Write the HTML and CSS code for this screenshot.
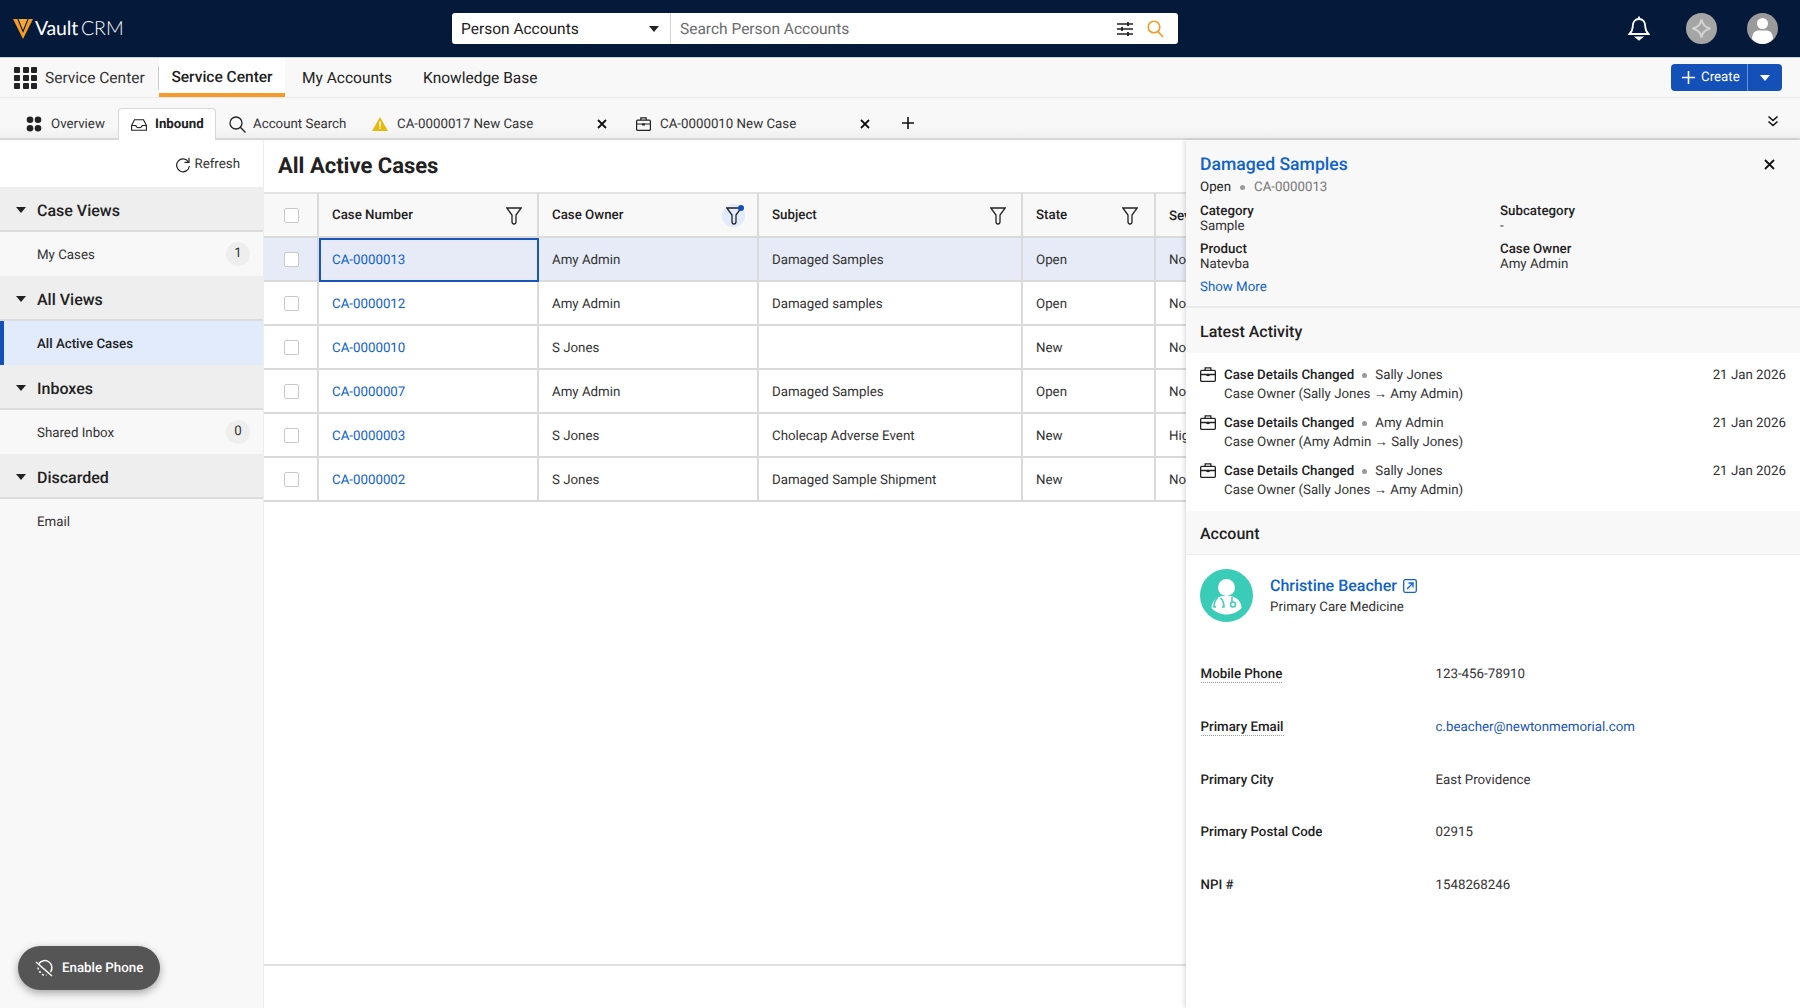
FILE: index.html
```html
<!DOCTYPE html>
<html lang="en">
<head>
<meta charset="utf-8">
<title>Vault CRM</title>
<link rel="stylesheet" href="styles.css">
</head>
<body>
<div class="app">
  <header class="topbar">
    <div class="logo">
      <svg class="logo-v" viewBox="0 0 20 20" width="20" height="20"><path d="M0 0h20L10 20z" fill="#f59a23"/><path d="M5 0l5 12.500L15 0" fill="#f7a93c" stroke="#05193a" stroke-width="1.100"/></svg>
      <span class="logo-a">Vault</span><span class="logo-b">CRM</span>
    </div>
    <div class="search">
      <div class="search-type"><span>Person Accounts</span><i class="caret caret-dark"></i></div>
      <div class="search-input">
        <span class="placeholder">Search Person Accounts</span>
        <svg class="sliders" width="16" height="14" viewBox="0 0 16 14" fill="none" stroke="#222" stroke-width="1.400"><path d="M0 2h16M0 7h16M0 12h16"/><path d="M11 0v4M5 5v4M11 10v4" stroke-width="1.800"/></svg>
        <svg class="magnify" width="17" height="18" viewBox="0 0 17 18" fill="none" stroke="#f59a23" stroke-width="1.600"><circle cx="7" cy="7" r="5.800"/><path d="M11 11.500l5 5.500"/></svg>
      </div>
    </div>
    <div class="top-icons">
      <svg width="22" height="25" viewBox="0 0 22 25" fill="none" stroke="#fff" stroke-width="1.800"><path d="M11 3c-4 0-6.200 3-6.200 7 0 4-1.300 6-3.300 8h19c-2-2-3.300-4-3.300-8 0-4-2.200-7-6.200-7z"/><path d="M11 0.500v2.500"/><path d="M8.500 21.500h5l-2.500 2z" fill="#fff"/></svg>
      <span class="avatar-round">
        <svg width="31" height="31" viewBox="0 0 31 31"><circle cx="15.500" cy="15.500" r="15.500" fill="#a5a5a5"/><path d="M15.500 6.500c1 5.500 3.500 8 9 9-5.500 1-8 3.500-9 9-1-5.500-3.500-8-9-9 5.500-1 8-3.500 9-9z" fill="none" stroke="#d3d3d3" stroke-width="2"/></svg>
      </span>
      <span class="avatar-round">
        <svg width="31" height="31" viewBox="0 0 31 31"><circle cx="15.500" cy="15.500" r="15.500" fill="#9a9a9a"/><circle cx="15.500" cy="10.500" r="5.500" fill="#fff"/><path d="M5 26c0-6 3-8.500 7-8.500h7c4 0 7 2.500 7 8.500-3 3.300-7 5-10.500 5S8 29.300 5 26z" fill="#fff"/></svg>
      </span>
    </div>
  </header>

  <nav class="navbar">
    <div class="grid-icon"><i></i><i></i><i></i><i></i><i></i><i></i><i></i><i></i><i></i></div>
    <span class="app-name">Service Center</span>
    <a class="nav-link nav-active">Service Center</a>
    <a class="nav-link nav-mid">My Accounts</a>
    <a class="nav-link">Knowledge Base</a>
    <div class="create">
      <span class="create-main">
        <svg width="13" height="13" viewBox="0 0 13 13" stroke="#fff" stroke-width="1.600"><path d="M6.500 0v13M0 6.500h13"/></svg>
        Create
      </span>
      <span class="create-drop"><i class="caret caret-light"></i></span>
    </div>
  </nav>

  <div class="tabs">
    <div class="tab tab-overview">
      <svg width="16" height="16" viewBox="0 0 16 16" fill="#222"><circle cx="4" cy="3.800" r="3.300"/><circle cx="12" cy="3.800" r="3.300"/><circle cx="4" cy="12.200" r="3.300"/><circle cx="12" cy="12.200" r="3.300"/></svg>
      <span>Overview</span>
    </div>
    <div class="tab tab-active">
      <svg width="16" height="12" viewBox="0 0 16 12" fill="none" stroke="#222" stroke-width="1.100"><path d="M.6 6.500 3.500.8h9l2.900 5.700v4.700H.6z"/><path d="M.6 6.500h4.200c.3 1.500 1.500 2.200 3.200 2.200s2.900-.7 3.200-2.200h4.200"/></svg>
      <span>Inbound</span>
    </div>
    <div class="tab tab-search">
      <svg width="17" height="17" viewBox="0 0 17 17" fill="none" stroke="#222" stroke-width="1.300"><circle cx="7" cy="7" r="6"/><path d="M11.300 11.300 16.500 16.500"/></svg>
      <span>Account Search</span>
    </div>
    <div class="tab tab-warn">
      <svg width="16" height="14" viewBox="0 0 16 14"><path d="M8 0l8 14H0z" fill="#e8b80d"/><path d="M7.200 4.500h1.600v5H7.200zM7.200 10.500h1.600v1.600H7.200z" fill="#fff"/></svg>
      <span class="tab-text">CA-0000017 New Case</span>
      <svg class="tab-x" width="10" height="10" viewBox="0 0 10 10" stroke="#111" stroke-width="1.800"><path d="M1 1l8 8M9 1l-8 8"/></svg>
    </div>
    <div class="tab tab-case">
      <svg width="15" height="14" viewBox="0 0 15 14" fill="none" stroke="#222" stroke-width="1.200"><rect x=".6" y="3.200" width="13.800" height="10.200" rx="1"/><path d="M4.800 3V.8h5.400V3M.6 7h13.800"/><path d="M6 6.500h3v2H6z" fill="#222" stroke="none"/></svg>
      <span class="tab-text">CA-0000010 New Case</span>
      <svg class="tab-x" width="10" height="10" viewBox="0 0 10 10" stroke="#111" stroke-width="1.800"><path d="M1 1l8 8M9 1l-8 8"/></svg>
    </div>
    <svg class="tab-plus" width="12" height="12" viewBox="0 0 12 12" stroke="#111" stroke-width="1.600"><path d="M6 0v12M0 6h12"/></svg>
    <svg class="tab-more" width="12" height="12" viewBox="0 0 12 12" fill="none" stroke="#111" stroke-width="1.600"><path d="M1.500 1.500 6 5.500l4.500-4M1.500 6.500 6 10.500l4.500-4"/></svg>
  </div>

  <div class="workspace">
    <aside class="sidebar">
      <div class="refresh">
        <svg width="16" height="16" viewBox="0 0 16 16" fill="none" stroke="#222" stroke-width="1.200"><path d="M13.500 5A6.400 6.400 0 1 0 14.400 9"/><path d="M14 .8v4.600H9.500"/></svg>
        <span>Refresh</span>
      </div>
      <div class="sec"><i class="caret caret-dark"></i>Case Views</div>
      <div class="item">My Cases<b class="badge">1</b></div>
      <div class="sec"><i class="caret caret-dark"></i>All Views</div>
      <div class="item item-active">All Active Cases</div>
      <div class="sec"><i class="caret caret-dark"></i>Inboxes</div>
      <div class="item">Shared Inbox<b class="badge">0</b></div>
      <div class="sec"><i class="caret caret-dark"></i>Discarded</div>
      <div class="item">Email</div>
    </aside>

    <main class="main">
      <h1 class="title">All Active Cases</h1>
      <div class="table-wrap">
        <table class="cases">
          <colgroup><col class="c0"><col class="c1"><col class="c2"><col class="c3"><col class="c4"><col class="c5"></colgroup>
          <thead>
            <tr>
              <th class="chk"><span class="box"></span></th>
              <th><div class="th"><span>Case Number</span><svg class="funnel" width="16" height="18" viewBox="0 0 16 18" fill="none" stroke="#222" stroke-width="1.300"><path d="M.8 1h14.400L10 8v6.500c0 1.500-1 2.500-2 2.500s-2-1-2-2.500V8z"/></svg></div></th>
              <th><div class="th"><span>Case Owner</span><span class="funnel-on"><svg width="16" height="18" viewBox="0 0 16 18" fill="none" stroke="#222" stroke-width="1.300"><path d="M.8 1h14.400L10 8v6.500c0 1.500-1 2.500-2 2.500s-2-1-2-2.500V8z"/></svg><i class="dot"></i></span></div></th>
              <th><div class="th"><span>Subject</span><svg class="funnel" width="16" height="18" viewBox="0 0 16 18" fill="none" stroke="#222" stroke-width="1.300"><path d="M.8 1h14.400L10 8v6.500c0 1.500-1 2.500-2 2.500s-2-1-2-2.500V8z"/></svg></div></th>
              <th><div class="th th-state"><span>State</span><svg class="funnel" width="16" height="18" viewBox="0 0 16 18" fill="none" stroke="#222" stroke-width="1.300"><path d="M.8 1h14.400L10 8v6.500c0 1.500-1 2.500-2 2.500s-2-1-2-2.500V8z"/></svg></div></th>
              <th class="last">Sev</th>
            </tr>
          </thead>
          <tbody>
            <tr class="sel"><td class="chk"><span class="box"></span></td><td class="focus"><a>CA-0000013</a></td><td>Amy Admin</td><td>Damaged Samples</td><td>Open</td><td class="last">No</td></tr>
            <tr><td class="chk"><span class="box"></span></td><td><a>CA-0000012</a></td><td>Amy Admin</td><td>Damaged samples</td><td>Open</td><td class="last">No</td></tr>
            <tr><td class="chk"><span class="box"></span></td><td><a>CA-0000010</a></td><td>S Jones</td><td></td><td>New</td><td class="last">No</td></tr>
            <tr><td class="chk"><span class="box"></span></td><td><a>CA-0000007</a></td><td>Amy Admin</td><td>Damaged Samples</td><td>Open</td><td class="last">No</td></tr>
            <tr><td class="chk"><span class="box"></span></td><td><a>CA-0000003</a></td><td>S Jones</td><td>Cholecap Adverse Event</td><td>New</td><td class="last">Hig</td></tr>
            <tr><td class="chk"><span class="box"></span></td><td><a>CA-0000002</a></td><td>S Jones</td><td>Damaged Sample Shipment</td><td>New</td><td class="last">No</td></tr>
          </tbody>
        </table>
      </div>
      <div class="table-foot"></div>
    </main>

    <section class="panel">
      <div class="summary">
        <div class="sum-head">
          <h2 class="sum-title">Damaged Samples</h2>
          <svg class="sum-x" width="11" height="11" viewBox="0 0 11 11" stroke="#111" stroke-width="1.800"><path d="M1 1l9 9M10 1l-9 9"/></svg>
        </div>
        <div class="sum-sub"><span>Open</span><i class="bullet"></i><span class="muted">CA-0000013</span></div>
        <div class="facts">
          <div><b>Category</b><span>Sample</span></div>
          <div><b>Subcategory</b><span>-</span></div>
          <div><b>Product</b><span>Natevba</span></div>
          <div><b>Case Owner</b><span>Amy Admin</span></div>
        </div>
        <a class="show-more">Show More</a>
      </div>
      <h3 class="band band-activity">Latest Activity</h3>
      <div class="activity">
        <div class="act">
          <svg class="brief" width="16" height="15" viewBox="0 0 15 14" fill="none" stroke="#222" stroke-width="1.200"><rect x=".6" y="3.200" width="13.800" height="10.200" rx="1"/><path d="M4.800 3V.8h5.400V3M.6 7h13.800"/><path d="M6 6.500h3v2H6z" fill="#222" stroke="none"/></svg>
          <div class="act-body">
            <div class="act-top"><b>Case Details Changed</b><i class="bullet"></i><span>Sally Jones</span><span class="date">21 Jan 2026</span></div>
            <div class="act-sub">Case Owner (Sally Jones → Amy Admin)</div>
          </div>
        </div>
        <div class="act">
          <svg class="brief" width="16" height="15" viewBox="0 0 15 14" fill="none" stroke="#222" stroke-width="1.200"><rect x=".6" y="3.200" width="13.800" height="10.200" rx="1"/><path d="M4.800 3V.8h5.400V3M.6 7h13.800"/><path d="M6 6.500h3v2H6z" fill="#222" stroke="none"/></svg>
          <div class="act-body">
            <div class="act-top"><b>Case Details Changed</b><i class="bullet"></i><span>Amy Admin</span><span class="date">21 Jan 2026</span></div>
            <div class="act-sub">Case Owner (Amy Admin → Sally Jones)</div>
          </div>
        </div>
        <div class="act">
          <svg class="brief" width="16" height="15" viewBox="0 0 15 14" fill="none" stroke="#222" stroke-width="1.200"><rect x=".6" y="3.200" width="13.800" height="10.200" rx="1"/><path d="M4.800 3V.8h5.400V3M.6 7h13.800"/><path d="M6 6.500h3v2H6z" fill="#222" stroke="none"/></svg>
          <div class="act-body">
            <div class="act-top"><b>Case Details Changed</b><i class="bullet"></i><span>Sally Jones</span><span class="date">21 Jan 2026</span></div>
            <div class="act-sub">Case Owner (Sally Jones → Amy Admin)</div>
          </div>
        </div>
      </div>
      <h3 class="band band-account">Account</h3>
      <div class="account">
        <div class="person">
          <svg width="53" height="53" viewBox="0 0 53 53"><circle cx="26.500" cy="26.500" r="26.500" fill="#3accb6"/><circle cx="26.500" cy="18.500" r="8.500" fill="#fff"/><path d="M22 27h9c6 1.500 10.500 6 10.500 12-3.500 4-9 6.500-15 6.500s-11.500-2.500-15-6.500c0-6 4.500-10.500 10.500-12z" fill="#fff"/><path d="M17.500 29c-2.500 2-3.500 5-3.500 9h2M22 38h2c0-4-1-7-3.500-9" fill="none" stroke="#3accb6" stroke-width="1.500"/><path d="M32 28v5" stroke="#3accb6" stroke-width="1.500"/><circle cx="33" cy="35.500" r="2.500" fill="none" stroke="#3accb6" stroke-width="1.500"/></svg>
          <div class="person-text">
            <div class="person-name"><a>Christine Beacher</a><svg width="14" height="14" viewBox="0 0 14 14" fill="none" stroke="#0f62c9" stroke-width="1.300"><rect x=".7" y=".7" width="12.600" height="12.600" rx="1.500"/><path d="M4 10l6-6M5.500 4H10v4.500"/></svg></div>
            <div class="person-spec">Primary Care Medicine</div>
          </div>
        </div>
        <dl class="fields">
          <dt><span class="dotted">Mobile Phone</span></dt><dd>123-456-78910</dd>
          <dt><span class="dotted">Primary Email</span></dt><dd><a>c.beacher@newtonmemorial.com</a></dd>
          <dt>Primary City</dt><dd>East Providence</dd>
          <dt>Primary Postal Code</dt><dd>02915</dd>
          <dt>NPI #</dt><dd>1548268246</dd>
        </dl>
      </div>
    </section>

    <button class="phone">
      <svg width="19" height="19" viewBox="0 0 19 19" fill="none" stroke="#fff" stroke-width="1.500"><path d="M4 4.500A7 7 0 0 1 15.500 13M1 3l16 14"/><path d="M3 8.500c.5 3 2.500 6 5.500 7.500h3" stroke-dasharray="2 2"/></svg>
      Enable Phone
    </button>
  </div>
</div>
</body>
</html>
```
FILE: styles.css
```css
* { box-sizing: border-box; }
html, body { margin: 0; height: 100%; }
body { font-family: Roboto, "Noto Sans", sans-serif; font-size: 13.300px; color: #222; background: #fff; overflow: hidden; text-rendering: geometricPrecision; }
.app { width: 1800px; height: 1008px; display: flex; flex-direction: column; }
a { color: #0f62c9; text-decoration: none; }
h1, h2, h3, dl, dd { margin: 0; }

.caret { display: block; width: 0; height: 0; border-left: 5px solid transparent; border-right: 5px solid transparent; }
.caret-dark { border-top: 6px solid #222; }
.caret-light { border-top: 6px solid #fff; }

.topbar { height: 58px; flex: none; background: #05193a; border-bottom: 1px solid #c9cfdc; display: flex; align-items: center; padding-left: 13px; }
.logo { width: 439px; display: flex; align-items: center; color: #fff; font-family: Lato, sans-serif; font-size: 19.500px; }
.logo-v { margin-right: 2px; }
.logo-a { font-weight: 400; letter-spacing: -0.2px; }
.logo-b { font-weight: 300; margin-left: 3px; }
.search { width: 726px; height: 31px; background: #fff; border-radius: 3px; display: flex; }
.search-type { width: 219px; display: flex; align-items: center; justify-content: space-between; padding: 0 11px 0 9px; border-right: 1px solid #d0d5e4; font-size: 15.500px; color: #222; }
.search-input { flex: 1; display: flex; align-items: center; padding: 0 14px 0 9px; }
.placeholder { flex: 1; font-size: 15.500px; color: #6b6b6b; }
.sliders { margin-right: 14px; }
.top-icons { margin-left: auto; display: flex; align-items: center; padding-right: 22px; }
.top-icons > svg { margin-right: 36px; }
.avatar-round { display: block; height: 31px; }
.avatar-round + .avatar-round { margin-left: 30px; }

.navbar { height: 40px; flex: none; background: #f8f8f8; border-bottom: 1px solid #ebebeb; display: flex; align-items: center; padding-left: 14px; font-size: 15.500px; }
.grid-icon { width: 23px; height: 22px; display: grid; grid-template-columns: repeat(3, 6px); grid-auto-rows: 6px; gap: 2px 2.500px; }
.grid-icon i { background: #222; border-radius: 1px; }
.app-name { margin-left: 8px; width: 114px; height: 24px; line-height: 24px; border-right: 1px solid #ccc; color: #333; }
.nav-link { color: #222; }
.nav-active { width: 126px; height: 39px; line-height: 38px; text-align: center; background: #fff; border-bottom: 4px solid #f59a2b; font-weight: 500; font-size: 15.500px; }
.nav-mid { margin: 0 31px 0 17px; }
.create { margin-left: auto; margin-right: 18px; height: 27px; display: flex; background: #1350b8; border-radius: 4px; color: #fff; font-size: 13.300px; }
.create-main { width: 77px; display: flex; align-items: center; gap: 6px; padding-left: 11px; border-right: 1px solid #6c93d6; }
.create-drop { width: 34px; display: flex; align-items: center; justify-content: center; }

.tabs { height: 42px; flex: none; background: linear-gradient(#f8f8f8 70%, #efefef); border-bottom: 2px solid #d8d8d8; display: flex; align-items: flex-end; position: relative; font-size: 13.300px; color: #333; }
.tab { height: 32px; display: flex; align-items: center; margin-bottom: -2px; }
.tab-overview { width: 118px; padding-left: 26px; gap: 9px; }
.tab-active { width: 98px; padding-left: 12px; gap: 8px; background: #fff; border: 1px solid #d8d8d8; border-bottom: 0; border-radius: 4px 4px 0 0; font-weight: 700; color: #222; }
.tab-search { width: 143px; padding-left: 13px; gap: 7px; }
.tab-warn { width: 264px; padding-left: 13px; gap: 9px; }
.tab-case { width: 264px; padding-left: 13px; gap: 9px; }
.tab-text { width: 195px; }
.tab-x { margin-left: -4px; }
.tab-plus { margin: 0 0 9px 15px; }
.tab-more { margin: 0 21px 11px auto; }

.workspace { flex: 1; min-height: 0; display: flex; position: relative; }
.sidebar { width: 264px; flex: none; background: #f8f8f8; border-right: 1px solid #ededed; }
.refresh { height: 47px; padding-top: 2px; background: #fff; display: flex; align-items: center; justify-content: flex-end; gap: 4px; padding-right: 23px; color: #333; }
.sec { height: 45px; padding-top: 3px; background: #eeeeee; border-bottom: 2px solid #dcdcdc; display: flex; align-items: center; font-size: 16px; font-weight: 500; color: #222; }
.sec .caret { margin: 0 11px 0 16px; }
.item { height: 44px; display: flex; align-items: center; justify-content: space-between; padding: 2px 13px 0 37px; color: #333; }
.item-active { background: #e1ebfb; border-left: 4px solid #1350b8; padding-left: 33px; font-weight: 500; color: #222; }
.badge { width: 24px; height: 24px; margin-top: -2px; border-radius: 50%; background: #eeeeee; font-weight: 400; text-align: center; line-height: 24px; }

.main { flex: 1; min-width: 0; display: flex; flex-direction: column; background: #fff; }
.title { height: 52px; flex: none; padding-left: 14px; font-size: 22px; line-height: 53px; font-weight: 700; color: #222; }
.table-wrap { flex: 1; min-height: 0; overflow: hidden; }
.cases { border-collapse: separate; border-spacing: 0; table-layout: fixed; width: 922px; }
.c0 { width: 55px; } .c1 { width: 220px; } .c2 { width: 220px; } .c3 { width: 264px; } .c4 { width: 133px; } .c5 { width: 30px; }
.cases th, .cases td { height: 44px; padding: 2px 13px 0; text-align: left; border-right: 2px solid #dadada; border-bottom: 2px solid #dadada; font-size: 13.300px; font-weight: 400; color: #333; white-space: nowrap; overflow: hidden; }
.cases th { height: 46px; background: #f8f8f8; border-top: 2px solid #e2e2e2; font-weight: 500; color: #222; }
.cases .chk { padding: 0 0 0 20px; }
.cases .last { border-right: 0; padding-right: 0; }
.th { display: flex; align-items: center; justify-content: space-between; padding-right: 2px; margin-top: -1px; }
.th-state { padding-right: 3px; }
.box { display: block; width: 15px; height: 15px; border: 1px solid #c9c9c9; border-radius: 2px; background: #fff; }
.sel td { background: #e7ebf7; }
.cases td.focus { box-shadow: inset 2px 2px 0 0 #1a56b8; border-right-color: #1a56b8; border-bottom-color: #1a56b8; }
.funnel-on { position: relative; width: 23px; height: 23px; margin: 0 -3px 0 0; border-radius: 50%; background: #e1ebfb; display: flex; align-items: center; justify-content: center; }
.dot { position: absolute; top: 1px; right: 1px; width: 6px; height: 6px; border-radius: 50%; background: #1350b8; }
.table-foot { height: 44px; flex: none; border-top: 2px solid #e0e0e0; }

.panel { position: absolute; top: 0; right: 0; bottom: 0; width: 614px; background: #fff; box-shadow: -2px 0 4px rgba(0,0,0,.12); display: flex; flex-direction: column; }
.summary { height: 168px; flex: none; background: #f8f8f8; border-bottom: 2px solid #ebebeb; padding: 13px 14px 0; }
.sum-head { display: flex; justify-content: space-between; align-items: flex-start; height: 24px; }
.sum-title { font-size: 17.600px; line-height: 24px; font-weight: 500; color: #0f62c9; }
.sum-x { margin: 6px 11px 0 0; }
.sum-sub { display: flex; align-items: center; height: 20px; color: #222; }
.muted { color: #777; }
.bullet { display: block; width: 5px; height: 5px; border-radius: 50%; background: #999; margin: 0 9px; }
.facts { display: grid; grid-template-columns: 300px 1fr; row-gap: 8px; margin-top: 7px; line-height: 15px; }
.facts b { display: block; font-weight: 500; color: #222; }
.facts span { display: block; color: #333; }
.show-more { display: block; margin-top: 7px; line-height: 18px; }
.band { flex: none; height: 45px; background: #f8f8f8; padding-left: 14px; font-size: 16px; font-weight: 500; color: #222; display: flex; align-items: center; }
.band-activity { padding-top: 1px; }
.band-account { height: 44px; padding-top: 2px; border-bottom: 1px solid #ebebeb; }
.activity { height: 158px; flex: none; padding: 12px 14px 0; }
.act { display: flex; height: 48px; }
.brief { margin-top: 2px; flex: none; }
.act-body { flex: 1; margin-left: 8px; color: #333; }
.act-top { display: flex; align-items: center; height: 20px; }
.act-top b { font-weight: 500; color: #222; }
.act-top .bullet { margin: 0 8px; }
.date { margin-left: auto; }
.act-sub { height: 20px; line-height: 20px; }
.account { flex: 1; }
.person { display: flex; align-items: center; padding: 14px 14px 0; }
.person-text { margin-left: 17px; padding-top: 2px; }
.person-name { display: flex; align-items: center; gap: 6px; font-size: 16px; font-weight: 500; line-height: 22px; }
.person-spec { line-height: 22px; color: #333; }
.fields { display: grid; grid-template-columns: 235px 1fr; grid-auto-rows: 52.800px; padding: 27px 14px 0 14.500px; color: #333; }
.fields dt { font-weight: 500; color: #222; line-height: 52.800px; }
.fields dd { line-height: 52.800px; }
.fields dd a { color: #1a56b8; }
.dotted { border-bottom: 1px dotted #999; }

.phone { position: absolute; left: 18px; bottom: 18px; width: 142px; height: 44px; border: 0; border-radius: 22px; background: #555; color: #fff; font: 500 13.300px Roboto, sans-serif; text-rendering: geometricPrecision; display: flex; align-items: center; gap: 8px; padding-left: 17px; box-shadow: 0 3px 8px rgba(0,0,0,.35); }
```
